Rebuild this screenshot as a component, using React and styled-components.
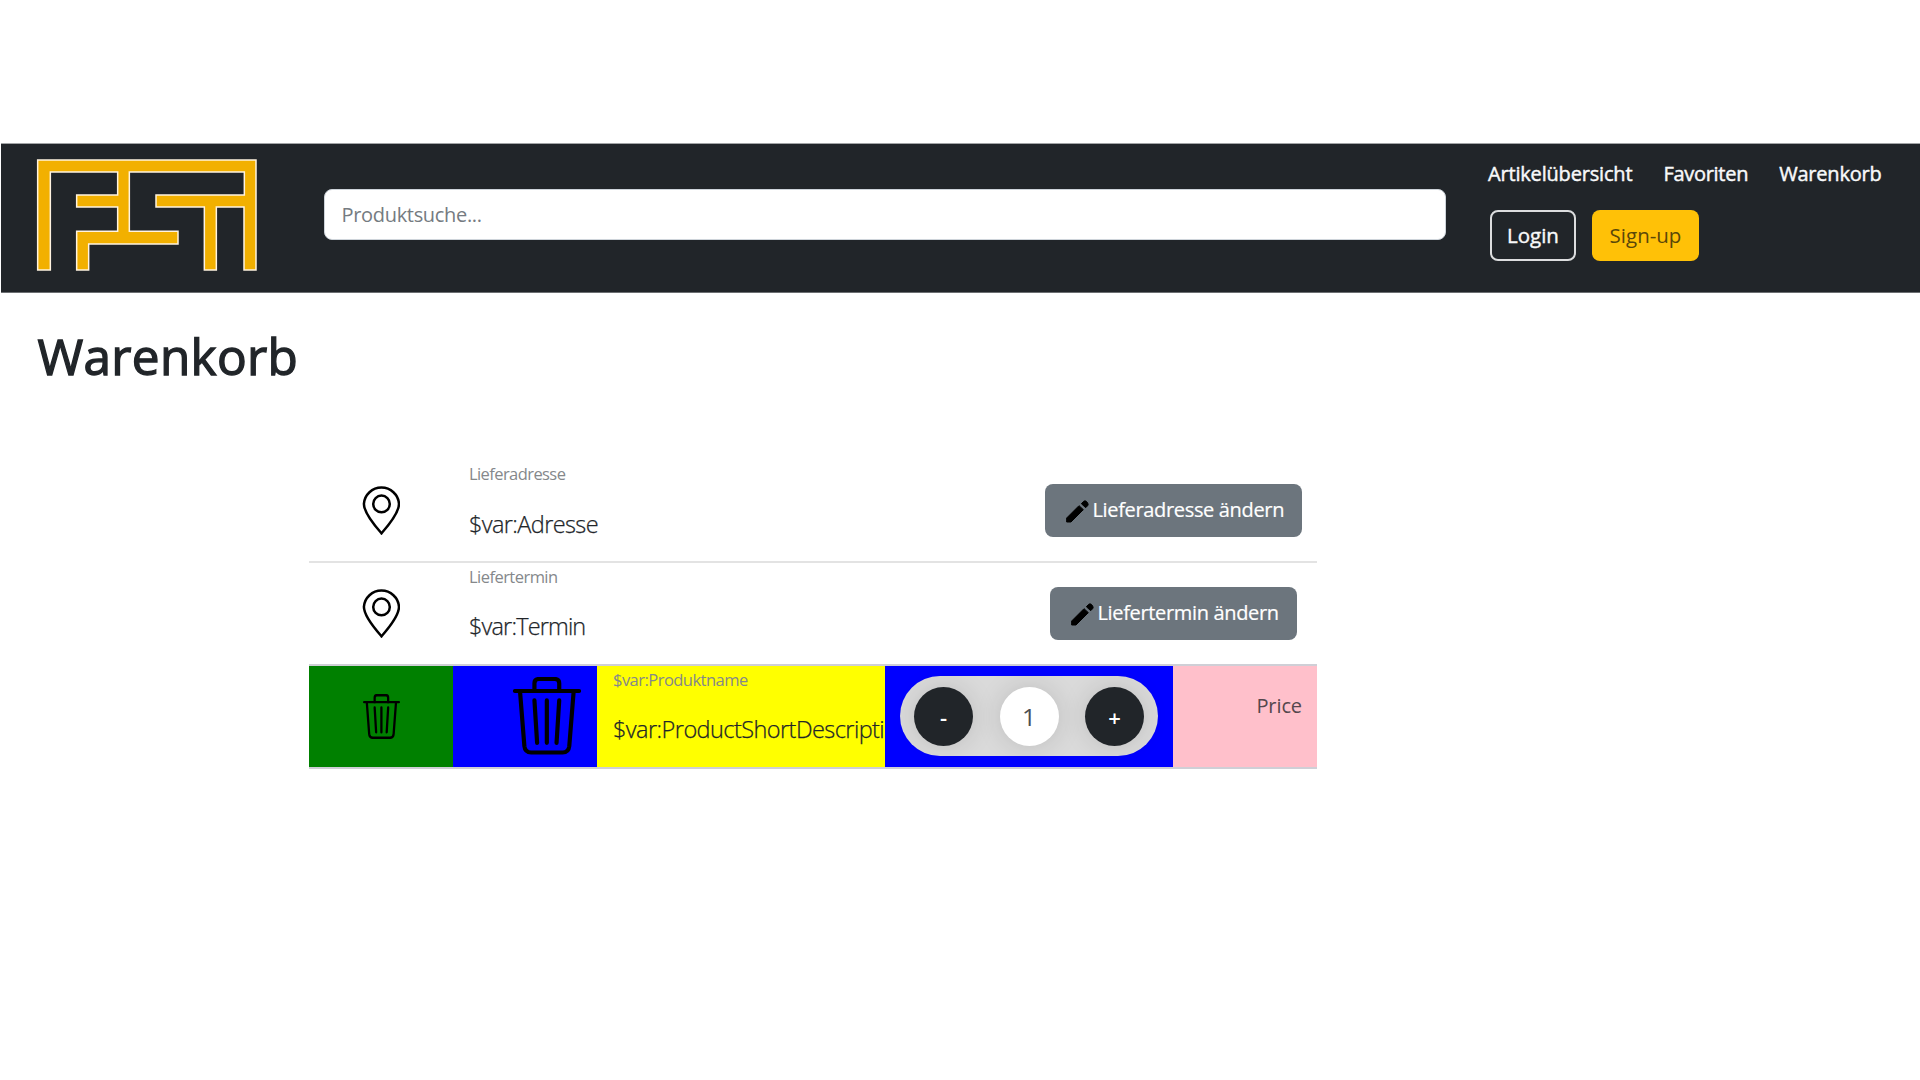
import React from "react";
import styled, { createGlobalStyle } from "styled-components";

const Global = createGlobalStyle`
  *, *::before, *::after { box-sizing: border-box; }
  body {
    margin: 0;
    background: #fff;
    color: #212529;
    font-family: "Open Sans", "Noto Sans", sans-serif;
    font-size: 20px;
  }
  h1, p { margin: 0; }
`;

const Page = styled.div`
  min-height: 1080px;
  padding-top: 143px;
  overflow: hidden;
`;

const Header = styled.header`
  display: flex;
  align-items: flex-start;
  height: 150px;
  margin-left: 1px;
  background: #212529;
  border-top: 1px solid #a2a4a6;
  border-bottom: 1px solid #6c6f72;
`;

const Logo = styled.svg`
  display: block;
  flex: none;
  width: 222px;
  height: 113px;
  margin: 14px 0 0 35px;
`;

const Search = styled.input`
  width: 1122px;
  height: 51px;
  margin: 45px 0 0 66px;
  padding: 0 16.5px;
  border: 1px solid #ced4da;
  border-radius: 8px;
  background: #fff;
  font: 400 20px "Open Sans", "Noto Sans", sans-serif;
  letter-spacing: -0.32px;
  outline: none;
  &::placeholder { color: #757b81; opacity: 1; }
`;

const Side = styled.div`
  display: flex;
  flex-direction: column;
  margin: 15px 0 0 42px;
`;

const Nav = styled.nav`
  display: flex;
  gap: 31px;
`;

const NavLink = styled.a`
  line-height: 30px;
  letter-spacing: ${(p) => p.$track}px;
  color: #f8f9fa;
  -webkit-text-stroke: 0.45px #f8f9fa;
  white-space: nowrap;
`;

const Actions = styled.div`
  display: flex;
  gap: 16px;
  margin: 21px 0 0 2px;
`;

const AuthButton = styled.button`
  width: ${(p) => p.$width}px;
  height: 51px;
  padding: 0;
  border-radius: 8px;
  font-family: inherit;
  font-size: 20.5px;
  font-weight: 400;
  line-height: 1;
`;

const LoginButton = styled(AuthButton)`
  border: 2px solid #dcddde;
  background: transparent;
  color: #f8f9fa;
  -webkit-text-stroke: 0.4px #f8f9fa;
`;

const SignupButton = styled(AuthButton)`
  border: 0;
  background: #ffc107;
  color: #5a4709;
`;

const Title = styled.h1`
  margin: 32px 0 0 37.5px;
  font-size: 49.5px;
  line-height: 63px;
  font-weight: 400;
  letter-spacing: 0.3px;
  -webkit-text-stroke: 1.3px #212529;
`;

const Cart = styled.main`
  width: 1008px;
  margin: 72px 0 0 309px;
`;

const Row = styled.section`
  display: grid;
  grid-template-columns: ${(p) => p.$columns};
  height: 103px;
  border-bottom: 2px solid ${(p) => p.$line || "#e3e3e3"};
`;

const Cell = styled.div`
  display: flex;
  align-items: center;
  justify-content: ${(p) => p.$justify || "center"};
  min-width: 0;
  padding: ${(p) => p.$pad || "0"};
  background: ${(p) => p.$bg || "transparent"};
`;

const Info = styled.div`
  padding-left: 16px;
  min-width: 0;
  white-space: nowrap;
  overflow: hidden;
  background: ${(p) => p.$bg || "transparent"};
`;

const Label = styled.p`
  font-size: 16.5px;
  line-height: ${(p) => p.$line || 27}px;
  letter-spacing: ${(p) => p.$track}px;
  color: #85888b;
`;

const Value = styled.p`
  margin-top: 18px;
  font-size: 23.5px;
  line-height: 36px;
  font-weight: 300;
  letter-spacing: ${(p) => p.$track}px;
  -webkit-text-stroke: 0.25px currentColor;
`;

const EditButton = styled.button`
  display: flex;
  align-items: center;
  width: ${(p) => p.$width}px;
  height: 53px;
  padding: 0 0 2px 21px;
  border: 0;
  border-radius: 8px;
  background: #6c757d;
  color: #fff;
  font: 400 20px "Open Sans", "Noto Sans", sans-serif;
  letter-spacing: -0.34px;
  -webkit-text-stroke: 0.2px #fff;
  white-space: nowrap;
`;

const PencilSvg = styled.svg`
  flex: none;
  width: 23px;
  height: 23px;
  margin: 4px 4px 0 0;
`;

const PinSvg = styled.svg`
  display: block;
  width: 38px;
  height: 50px;
`;

const TrashSvg = styled.svg`
  display: block;
  width: ${(p) => p.$w}px;
  height: ${(p) => p.$h}px;
`;

const Stepper = styled.div`
  display: flex;
  justify-content: space-between;
  align-items: center;
  width: 258px;
  height: 80px;
  padding: 0 14px;
  border-radius: 40px;
  background: #dadada;
`;

const Round = styled.div`
  display: flex;
  align-items: center;
  justify-content: center;
  width: 59px;
  height: 59px;
  border-radius: 50%;
  background: ${(p) => (p.$dark ? "#212529" : "#fff")};
  color: ${(p) => (p.$dark ? "#fff" : "#4b4f53")};
  font-size: ${(p) => (p.$dark ? 22 : 24.5)}px;
  font-weight: ${(p) => (p.$dark ? 600 : 400)};
  line-height: 1;
  padding-top: ${(p) => (p.$dark ? 2 : 2)}px;
  box-shadow: 0 0 26px rgba(0, 0, 0, 0.13);
`;

const Price = styled.span`
  font-size: 20px;
  line-height: 30px;
  letter-spacing: -0.1px;
  color: #54474d;
`;

const FstLogo = () => (
  <Logo viewBox="108 84 666 339">
    <path
      d="M113 420V90H768V420H732V231H649V420H613V231H468V195H733V126H388V304H534V342H266V420H230V304H353V231H230V195H353V126H151V420Z"
      fill="#f2b000"
      stroke="#fff3e0"
      strokeWidth="4.5"
    />
  </Logo>
);

const Pin = () => (
  <PinSvg viewBox="0 0 38 50" fill="none" stroke="#000" strokeWidth="2.5">
    <path d="M19.5 48.3C13.5 41.5 1.9 28.5 1.9 18.8A17.6 17.6 0 0 1 37 18.8C37 28.5 25.5 41.5 19.5 48.3Z" />
    <circle cx="19.5" cy="18.9" r="8.3" />
  </PinSvg>
);

const Pencil = () => (
  <PencilSvg viewBox="79 62 69 69" stroke="#000" strokeWidth="3" strokeLinejoin="round">
    <path d="M81 128V116L118 79L131 91L94 128Z" />
    <path d="M125 73L132 66Q136 63 140 66L144 71Q147 75 144 79L138 85Z" />
  </PencilSvg>
);

const Trash = ({ w, h }) => (
  <TrashSvg
    $w={w}
    $h={h}
    viewBox="25 36 203 232"
    preserveAspectRatio="none"
    fill="none"
    stroke="#000"
    strokeWidth="12.5"
    strokeLinecap="round"
  >
    <path d="M31 78H222" />
    <path d="M89 78V55Q89 42 102 42H150Q163 42 163 55V78" />
    <path d="M46 80L59 243Q61 262 79 262H173Q191 262 193 243L206 80" />
    <path d="M89 106L97 233M126 106V233M163 106L155 233" />
  </TrashSvg>
);

export default function App() {
  return (
    <Page>
      <Global />
      <Header>
        <FstLogo />
        <Search placeholder="Produktsuche..." />
        <Side>
          <Nav>
            <NavLink $track={-0.18}>Artikelübersicht</NavLink>
            <NavLink $track={-0.28}>Favoriten</NavLink>
            <NavLink $track={-0.2}>Warenkorb</NavLink>
          </Nav>
          <Actions>
            <LoginButton $width={86}>Login</LoginButton>
            <SignupButton $width={107}>Sign-up</SignupButton>
          </Actions>
        </Side>
      </Header>
      <Title>Warenkorb</Title>
      <Cart>
        <Row $columns="144px 1fr 288px">
          <Cell $pad="0 0 1px">
            <Pin />
          </Cell>
          <Info>
            <Label $line={28} $track={-0.58}>Lieferadresse</Label>
            <Value $track={-0.62}>$var:Adresse</Value>
          </Info>
          <Cell $pad="0 0 1px">
            <EditButton $width={257}>
              <Pencil />
              Lieferadresse ändern
            </EditButton>
          </Cell>
        </Row>
        <Row $columns="144px 1fr 288px" $line="#cfcfd6">
          <Cell $pad="0 0 1px">
            <Pin />
          </Cell>
          <Info>
            <Label $track={-0.54}>Liefertermin</Label>
            <Value $track={-0.85}>$var:Termin</Value>
          </Info>
          <Cell>
            <EditButton $width={247}>
              <Pencil />
              Liefertermin ändern
            </EditButton>
          </Cell>
        </Row>
        <Row $columns="144px 144px 288px 288px 144px" $line="#cfcfd6">
          <Cell $bg="#008000">
            <Trash w={37} h={45} />
          </Cell>
          <Cell $bg="#0000ff" $justify="flex-end" $pad="0 16px 1px 0">
            <Trash w={68} h={77.5} />
          </Cell>
          <Info $bg="#ffff00">
            <Label $track={-0.53}>$var:Produktname</Label>
            <Value $track={-0.56}>$var:ProductShortDescripti</Value>
          </Info>
          <Cell $bg="#0000ff" $pad="0 0 1px">
            <Stepper>
              <Round $dark>-</Round>
              <Round>1</Round>
              <Round $dark>+</Round>
            </Stepper>
          </Cell>
          <Cell $bg="#ffc0cb" $justify="flex-end" $pad="0 15px 22px 0">
            <Price>Price</Price>
          </Cell>
        </Row>
      </Cart>
    </Page>
  );
}
